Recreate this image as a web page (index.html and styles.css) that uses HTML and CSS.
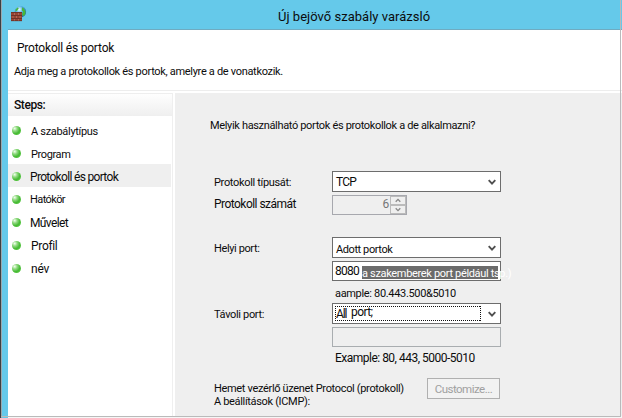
FILE: index.html
```html
<!DOCTYPE html>
<html lang="hu">
<head>
<meta charset="utf-8">
<title>Új bejövő szabály varázsló</title>
<link rel="stylesheet" href="styles.css">
</head>
<body>
<div class="window">
  <header class="titlebar">
    <svg class="app-icon" width="16" height="16" viewBox="0 0 16 16">
      <defs><radialGradient id="globe" cx=".4" cy=".3" r=".75"><stop offset="0" stop-color="#e8faff"/><stop offset=".45" stop-color="#50a9e0"/><stop offset="1" stop-color="#174b9c"/></radialGradient></defs>
      <circle cx="9.4" cy="5.8" r="5.7" fill="url(#globe)"/>
      <path d="M11 1.2l2 1.3 1.7 3.2-.6 3-2.3 1.7-.6-2.8 1-2-1.4-1.2zM4.5 3.5l2-2 1.3.5-1.5 2.5L4.5 5.5z" fill="#46b83c"/>
      <path d="M0 6h11v9H0z" fill="#984434"/>
      <path d="M0 6.5h11M0 9.5h11M0 12.5h11M0 14.7h11" stroke="#5f2c24" stroke-width=".7"/>
      <path d="M3.5 7v2M7.5 7v2M2 10v2M5.5 10v2M9 10v2M3.5 13v1.5M7.5 13v1.5" stroke="#c08070" stroke-width=".6"/>
    </svg>
    <h1 class="title">Új bejövő szabály varázsló</h1>
  </header>
  <section class="intro">
    <h2 class="heading">Protokoll és portok</h2>
    <p class="t description">Adja meg a protokollok és portok, amelyre a de vonatkozik.</p>
  </section>
  <div class="body">
    <nav class="sidebar">
      <div class="steps-title">Steps:</div>
      <ul class="steps">
        <li><i class="dot"></i><span class="t step-type">A szabálytípus</span></li>
        <li><i class="dot"></i><span class="t step-program">Program</span></li>
        <li class="active"><i class="dot"></i><span class="t step-ports">Protokoll és portok</span></li>
        <li><i class="dot"></i><span class="t step-scope">Hatókör</span></li>
        <li><i class="dot"></i><span class="t step-action">Művelet</span></li>
        <li><i class="dot"></i><span class="t step-profile">Profil</span></li>
        <li><i class="dot"></i><span class="t step-name">név</span></li>
      </ul>
    </nav>
    <main class="content">
      <p class="t question">Melyik használható portok és protokollok a de alkalmazni?</p>
      <div class="row row-type">
        <span class="t label">Protokoll típusát:</span>
        <div class="select"><span class="t value-tcp">TCP</span><svg class="chev" width="8" height="7" viewBox="0 0 8 7"><path d="M.7 1.2L4 4.6l3.3-3.4"/></svg></div>
      </div>
      <div class="row row-number">
        <span class="t label label-number">Protokoll számát</span>
        <div class="spinner"><span class="t digit">6</span>
          <div class="arrows"><span><svg width="6" height="5" viewBox="0 0 6 5"><path d="M.7 3.8L3 1.4l2.3 2.4"/></svg></span><span><svg width="6" height="5" viewBox="0 0 6 5"><path d="M.7 1.2L3 3.6l2.3-2.4"/></svg></span></div>
        </div>
      </div>
      <div class="row row-local">
        <span class="t label label-local">Helyi port:</span>
        <div class="select"><span class="t value-ports">Adott portok</span><svg class="chev" width="8" height="7" viewBox="0 0 8 7"><path d="M.7 1.2L4 4.6l3.3-3.4"/></svg></div>
      </div>
      <div class="row row-input">
        <span class="label"></span>
        <div class="input"><span class="t value-8080">8080</span><span class="t marked">a szakemberek port például tsp.)</span></div>
      </div>
      <p class="t hint">aample: 80.443.500&amp;5010</p>
      <div class="row row-remote">
        <span class="t label label-remote">Távoli port:</span>
        <div class="select focused"><svg class="focus-ring" width="146" height="15"><path d="M0 .5h146M0 14.5h146M.5 0v15M145.5 0v15"/></svg><span class="t value-all">All</span><span class="t value-port">port;</span><svg class="chev" width="8" height="7" viewBox="0 0 8 7"><path d="M.7 1.2L4 4.6l3.3-3.4"/></svg></div>
      </div>
      <div class="row row-empty"><span class="label"></span><div class="input disabled"></div></div>
      <p class="t hint hint-remote">Example: 80, 443, 5000-5010</p>
      <div class="row row-icmp">
        <div class="icmp"><p class="t">Hemet vezérlő üzenet Protocol (protokoll)</p><p class="t">A beállítások (ICMP):</p></div>
        <button class="customize" disabled>Customize...</button>
      </div>
    </main>
  </div>
</div>
</body>
</html>
```
FILE: styles.css
```css
* { box-sizing: border-box; }
body { margin: 0; width: 622px; height: 418px; overflow: hidden; background: #f6f6f6; font: 11px/14px Roboto, "Liberation Sans", sans-serif; color: #0c0c0c; }
h1, h2, p, ul { margin: 0; padding: 0; font-weight: 400; }
ul { list-style: none; }
svg { display: block; }
.t { white-space: nowrap; letter-spacing: -0.33px; line-height: 14px; }

.window { position: relative; width: 622px; height: 418px; padding-left: 8px; background: linear-gradient(90deg, #3b3f43 0 1px, #9ba9ae 1px 2px, #65c9ea 2px 8px, #f6f6f6 8px); }
.window::before { content: ""; position: absolute; left: 620px; top: 0; width: 1px; height: 417px; background: #b9b9bb; }
.window::after { content: ""; position: absolute; left: 1px; top: 416px; width: 620px; height: 1px; background: #bababa; }

.titlebar { display: flex; height: 30px; padding: 6px 0 0 3px; background: #65c9ea; border-bottom: 1px solid #6fabc1; }
.title { margin: 3px 0 0 251px; font-size: 13px; line-height: 16px; white-space: nowrap; letter-spacing: 0.02px; }

.intro { height: 61px; padding: 11px 0 0 6px; background: #fff; border-bottom: 1px solid #ededed; }
.heading { margin-left: 3px; font-size: 12px; line-height: 14px; letter-spacing: -0.2px; }
.description { margin-top: 10px; letter-spacing: -0.31px; }

.body { display: flex; height: 325px; padding-top: 2px; gap: 2px; background: #fff; }
.sidebar { width: 165px; border-top: 1px solid #eee; border-right: 1px solid #efefef; background: #fff; }
.steps-title { height: 22px; padding: 4px 0 0 6px; background: linear-gradient(#fefefe, #efefef); font-size: 12px; font-weight: 500; letter-spacing: -0.4px; }
.steps { padding-top: 2px; }
.steps li { display: flex; align-items: flex-start; height: 23px; margin-right: 1px; padding: 6px 0 0 4px; }
.steps .active { background: #efefef; }
.dot { width: 9px; height: 9px; margin: 2px 10px 0 0; border-radius: 50%; background: radial-gradient(circle at 30% 28%, #f4fff0 0, #8ed97e 28%, #45b933 58%, #58c843 78%, #b4e3ab 100%); }
.step-type { margin-top: 1px; letter-spacing: -0.31px; }
.step-program { margin-top: 1px; letter-spacing: -0.38px; }
.step-ports { margin-left: -1px; font-size: 12px; letter-spacing: -0.68px; }
.step-scope { margin: 0 0 0 -1px; letter-spacing: -0.6px; }
.step-action { margin-left: -1px; font-size: 12px; letter-spacing: -0.63px; }
.step-profile { font-size: 12px; letter-spacing: -0.32px; }
.step-name { font-size: 12px; letter-spacing: -0.24px; }

.content { width: 447px; padding: 26px 0 0 39px; background: #efefef; }
.question { margin-left: -4px; letter-spacing: -0.34px; }
.row { display: flex; align-items: flex-start; }
.label { width: 118px; padding-top: 5px; }
.label-number { padding-top: 2px; font-size: 12px; letter-spacing: -0.53px; }
.label-remote { letter-spacing: -0.34px; }
.row-type { margin-top: 38px; height: 21px; }
.row-number { margin-top: 3px; }
.row-local { margin-top: 22px; }
.row-input { margin-top: 3px; }
.row-remote { margin-top: 2px; }
.row-empty { margin-top: 3px; }
.select, .input { position: relative; display: flex; width: 169px; height: 21px; padding: 3px 0 0 3px; background: #fff; border: 1px solid #6d6d6d; }
.input { height: 20px; padding: 2px 0 0 2px; }
.input.disabled { background: #efefef; border-color: #a9adb0; }
.chev { margin: 4px 4px 0 auto; fill: none; stroke: #505050; stroke-width: 1.9; }
.value-tcp { font-size: 12px; letter-spacing: -0.79px; }
.value-ports { padding-top: 2px; letter-spacing: -0.41px; }
.label-local { letter-spacing: -0.38px; }
.value-8080 { width: 27px; font-size: 12px; letter-spacing: -0.74px; }
.marked { width: 136px; height: 13px; margin-top: 2px; line-height: 15px; background: #6b6b6b; color: #fff; }
.spinner { display: flex; width: 75px; height: 20px; padding: 0; border: 1px solid #a7a8ae; }
.digit { width: 57px; padding-top: 1px; text-align: right; font-size: 12px; color: #777; padding-right: 1px; }
.arrows { width: 16px; }
.arrows span { display: flex; height: 9px; border: 1px solid #bbb; align-items: center; justify-content: center; }
.arrows svg { fill: none; stroke: #888; stroke-width: 1.3; }
.hint { margin: 6px 0 0 121px; }
.hint-remote { margin-top: 4px; font-size: 12px; letter-spacing: -0.51px; }
.focus-ring { position: absolute; left: 2px; top: 2px; fill: none; stroke: #111; stroke-dasharray: 1 1; }
.value-all { width: 15px; font-size: 12px; letter-spacing: -1.1px; }
.value-port { margin-top: -2px; font-size: 12px; letter-spacing: -0.58px; }
.row-icmp { margin-top: 13px; }
.icmp { width: 213px; padding-top: 4px; }
.icmp .t { line-height: 13px; }
.customize { width: 73px; height: 21px; padding: 0; background: #f2f2f2; border: 1px solid #b0b0b0; font: 11.5px/14px Roboto, sans-serif; letter-spacing: -0.5px; color: #a0a0a0; }
```
